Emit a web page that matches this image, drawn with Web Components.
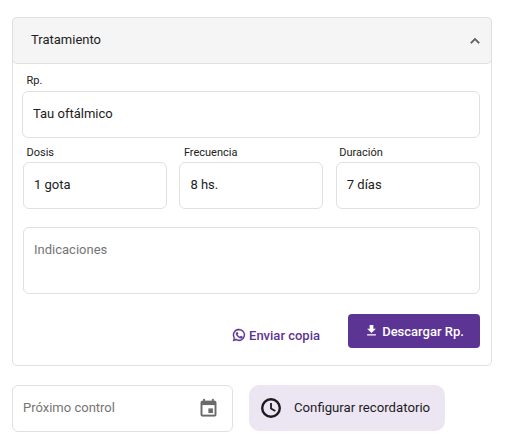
<!DOCTYPE html>
<html lang="es">
<head>
<meta charset="utf-8">
<title>Tratamiento</title>
<style>
  html, body { margin: 0; background: #fff; }
  body { font-family: Roboto, "Liberation Sans", sans-serif; color: #1c1b1f; }
  tr-page { width: 480px; margin-left: 12px; padding-top: 17px; }
</style>
</head>
<body>
<tr-page>
  <tr-card title="Tratamiento">
    <tr-field label="Rp." value="Tau oftálmico" class="rp"></tr-field>
    <tr-row>
      <tr-field label="Dosis" value="1 gota"></tr-field>
      <tr-field label="Frecuencia" value="8 hs." style="--label-x: 4.5px"></tr-field>
      <tr-field label="Duración" value="7 días"></tr-field>
    </tr-row>
    <tr-field placeholder="Indicaciones" tall></tr-field>
    <tr-actions></tr-actions>
  </tr-card>
  <tr-footer></tr-footer>
</tr-page>

<script>
class TrPage extends HTMLElement {
  constructor() {
    super();
    this.attachShadow({mode: 'open'}).innerHTML = `
      <style>:host { display: block; box-sizing: content-box; }</style>
      <slot></slot>`;
  }
}

class TrCard extends HTMLElement {
  constructor() {
    super();
    this.attachShadow({mode: 'open'}).innerHTML = `
      <style>
        :host { display: block; box-sizing: border-box; height: 349px; border: 1px solid #e0e0e0; border-radius: 5px; }
        header {
          display: flex; align-items: center; justify-content: space-between;
          box-sizing: border-box; height: 47px; margin: -1px -1px 0; padding: 0 7.5px 2px 18px;
          background: #f5f5f5; border: 1px solid #e0e0e0; border-radius: 5px;
          font-size: 13px; color: #212121;
        }
        svg { width: 18px; height: 18px; fill: #616161; stroke: #616161; stroke-width: .8; display: block; margin-top: 2px; }
        .body { display: flex; flex-direction: column; padding: 10px 11px 0 9px; }
      </style>
      <header><span></span>
        <svg viewBox="0 0 24 24"><path d="M7.41 15.41 12 10.83l4.59 4.58L18 14l-6-6-6 6z"/></svg>
      </header>
      <div class="body"><slot></slot></div>`;
    this.shadowRoot.querySelector('span').textContent = this.getAttribute('title');
    this.removeAttribute('title');
  }
}

class TrField extends HTMLElement {
  constructor() {
    super();
    this.attachShadow({mode: 'open'}).innerHTML = `
      <style>
        :host { display: block; min-width: 0; }
        :host(.rp) { margin-bottom: 8px; --label-x: 4.5px; --label-gap: 4px; }
        :host([tall]) { margin: 18px 0 20px 1px; }
        label { display: block; height: 13px; margin: 0 0 var(--label-gap, 3px) var(--label-x, 3.5px); font-size: 11px; line-height: 13px; color: #212121; }
        .box {
          box-sizing: border-box; height: 47px; padding: 0 10px 2px; display: flex; align-items: center;
          border: 1px solid #e0e0e0; border-radius: 6px; background: #fff;
          font-size: 13px; color: #212121;
        }
        :host([tall]) .box { height: 67px; align-items: flex-start; padding-top: 14px; }
        .ph { color: #757575; }
      </style>
      <label></label>
      <div class="box"></div>`;
  }
  connectedCallback() {
    const label = this.shadowRoot.querySelector('label');
    const box = this.shadowRoot.querySelector('.box');
    if (this.hasAttribute('label')) label.textContent = this.getAttribute('label');
    else label.remove();
    if (this.hasAttribute('value')) box.textContent = this.getAttribute('value');
    else {
      box.classList.add('ph');
      box.textContent = this.getAttribute('placeholder');
    }
  }
}

class TrRow extends HTMLElement {
  constructor() {
    super();
    this.attachShadow({mode: 'open'}).innerHTML = `
      <style>:host { display: grid; grid-template-columns: repeat(3, 144px); column-gap: 12.4px; margin-left: 1px; }</style>
      <slot></slot>`;
  }
}

class TrActions extends HTMLElement {
  constructor() {
    super();
    this.attachShadow({mode: 'open'}).innerHTML = `
      <style>
        :host { display: flex; justify-content: flex-end; align-items: center; }
        .copy { display: flex; align-items: center; gap: 3px; margin: 8px 28px 0 0; font-size: 13px; font-weight: 500; color: #5c3494; }
        .copy svg { width: 14px; height: 14px; fill: #5c3494; stroke: #5c3494; stroke-width: .5; display: block; }
        .down {
          display: flex; align-items: center; justify-content: center; gap: 3px;
          box-sizing: border-box; width: 132px; height: 34px; border-radius: 4px;
          background: #5c3494; color: #fff; font-size: 13px; font-weight: 500;
        }
        .down svg { width: 15px; height: 15px; fill: #fff; display: block; margin-top: -1px; }
      </style>
      <div class="copy">
        <svg viewBox="0 0 24 24"><path d="M12 1.5A10.4 10.4 0 0 0 3 17.2L1.6 22.5l5.4-1.4A10.4 10.4 0 1 0 12 1.5zm0 2.2a8.2 8.2 0 1 1-4.4 15.1l-.5-.3-3 .8.8-2.9-.3-.5A8.2 8.2 0 0 1 12 3.7zM8.6 7.2c-.2 0-.5.1-.8.4-.3.3-1 1-1 2.3s1 2.7 1.1 2.9c.2.2 2 3 4.8 4.2 2.4.9 2.9.7 3.4.7.5-.1 1.7-.7 1.9-1.4.2-.6.2-1.2.2-1.3-.1-.1-.3-.2-.6-.3l-2-1c-.3-.1-.5-.1-.7.2l-.9 1.1c-.2.2-.3.2-.6.1-.3-.2-1.2-.5-2.3-1.4-.9-.8-1.4-1.7-1.6-2-.2-.3 0-.5.1-.6l.5-.5.3-.5c.1-.2 0-.4 0-.5l-.9-2.1c-.2-.5-.5-.5-.7-.5z"/></svg>
        <span>Enviar copia</span>
      </div>
      <div class="down">
        <svg viewBox="0 0 24 24"><path d="M19 9h-4V3H9v6H5l7 7 7-7zM5 18v2h14v-2H5z"/></svg>
        <span>Descargar Rp.</span>
      </div>`;
  }
}

class TrFooter extends HTMLElement {
  constructor() {
    super();
    this.attachShadow({mode: 'open'}).innerHTML = `
      <style>
        :host { display: flex; gap: 16px; margin-top: 19px; align-items: flex-start; }
        .date {
          display: flex; align-items: center; justify-content: space-between;
          box-sizing: border-box; width: 221px; height: 47px; padding: 0 13px 2px 10px;
          border: 1px solid #e0e0e0; border-radius: 6px; font-size: 13px; color: #757575;
        }
        .date svg { width: 21px; height: 21px; fill: #6b6b6b; stroke: #6b6b6b; stroke-width: .2; display: block; margin-top: 2px; }
        .remind {
          display: flex; align-items: center; gap: 11px;
          box-sizing: border-box; width: 196px; height: 46px; padding: 0 0 1px 10px;
          background: #ece6f2; border-radius: 10px; font-size: 13.2px; color: #1c1b1f;
        }
        .remind svg { width: 24px; height: 24px; fill: none; stroke: #1c1b1f; display: block; }
      </style>
      <div class="date">
        <span>Próximo control</span>
        <svg viewBox="0 0 24 24"><path d="M17 12h-5v5h5v-5zM16 1v2H8V1H6v2H5a2 2 0 0 0-2 2v14a2 2 0 0 0 2 2h14a2 2 0 0 0 2-2V5a2 2 0 0 0-2-2h-1V1h-2zm3 18H5V8h14v11z" /></svg>
      </div>
      <div class="remind">
        <svg viewBox="0 0 24 24"><circle cx="12" cy="12" r="8.8" stroke-width="2.4"/><path d="M12 7v5.4l4.3 2.6" stroke-width="1.8"/></svg>
        <span>Configurar recordatorio</span>
      </div>`;
  }
}

customElements.define('tr-page', TrPage);
customElements.define('tr-card', TrCard);
customElements.define('tr-field', TrField);
customElements.define('tr-row', TrRow);
customElements.define('tr-actions', TrActions);
customElements.define('tr-footer', TrFooter);
</script>
</body>
</html>
